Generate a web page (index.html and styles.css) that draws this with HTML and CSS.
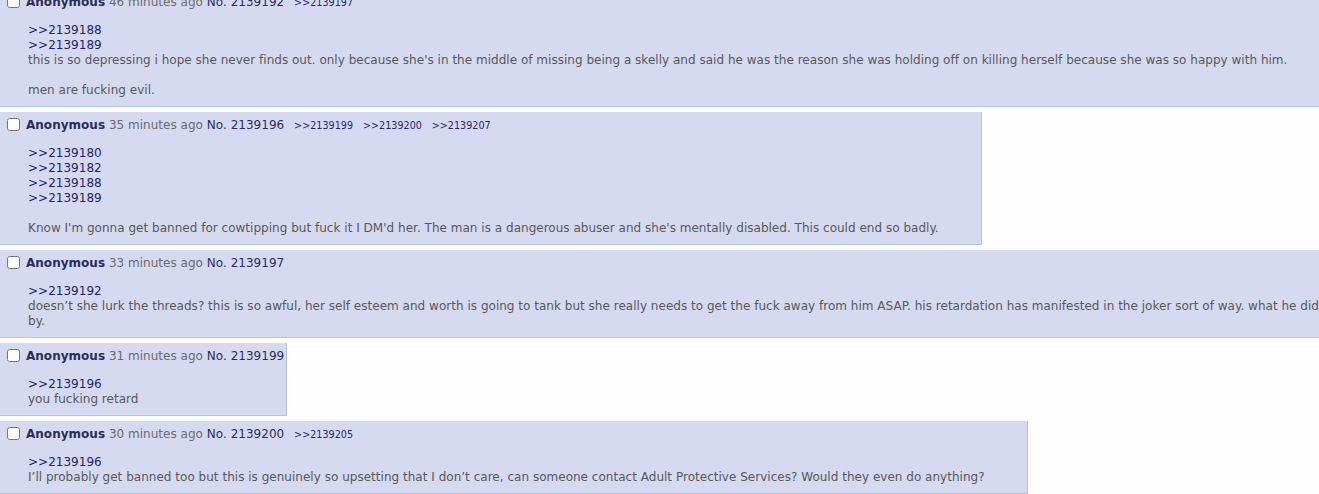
FILE: index.html
```html
<!DOCTYPE html>
<html lang="en">
<head>
	<meta charset="utf-8">
	<title>Thread</title>
	<link rel="stylesheet" href="styles.css">
</head>
<body>

	<div class="thread">

		<div class="reply">
			<div class="post-info"><input type="checkbox"><span class="name">Anonymous</span> <span class="time">46 minutes ago</span> <span class="num">No. 2139192</span> <a class="backlink" href="#p2139197">&gt;&gt;2139197</a></div>
			<blockquote class="message">
				<a class="quote" href="#p2139188">&gt;&gt;2139188</a><br>
				<a class="quote" href="#p2139189">&gt;&gt;2139189</a><br>
				this is so depressing i hope she never finds out. only because she's in the middle of missing being a skelly and said he was the reason she was holding off on killing herself because she was so happy with him.<br>
				<br>
				men are fucking evil.
			</blockquote>
		</div>

		<div class="reply" id="p2139196">
			<div class="post-info"><input type="checkbox"><span class="name">Anonymous</span> <span class="time">35 minutes ago</span> <span class="num">No. 2139196</span> <a class="backlink" href="#p2139199">&gt;&gt;2139199</a> <a class="backlink" href="#p2139200">&gt;&gt;2139200</a> <a class="backlink" href="#p2139207">&gt;&gt;2139207</a></div>
			<blockquote class="message">
				<a class="quote" href="#p2139180">&gt;&gt;2139180</a><br>
				<a class="quote" href="#p2139182">&gt;&gt;2139182</a><br>
				<a class="quote" href="#p2139188">&gt;&gt;2139188</a><br>
				<a class="quote" href="#p2139189">&gt;&gt;2139189</a><br>
				<br>
				Know I'm gonna get banned for cowtipping but fuck it I DM'd her. The man is a dangerous abuser and she's mentally disabled. This could end so badly.
			</blockquote>
		</div>

		<div class="reply" id="p2139197">
			<div class="post-info"><input type="checkbox"><span class="name">Anonymous</span> <span class="time">33 minutes ago</span> <span class="num">No. 2139197</span></div>
			<blockquote class="message">
				<a class="quote" href="#p2139192">&gt;&gt;2139192</a><br>
				doesn’t she lurk the threads? this is so awful, her self esteem and worth is going to tank but she really needs to get the fuck away from him ASAP. his retardation has manifested in the joker sort of way. what he did is sick<br>
				by.
			</blockquote>
		</div>

		<div class="reply" id="p2139199">
			<div class="post-info"><input type="checkbox"><span class="name">Anonymous</span> <span class="time">31 minutes ago</span> <span class="num">No. 2139199</span></div>
			<blockquote class="message">
				<a class="quote" href="#p2139196">&gt;&gt;2139196</a><br>
				you fucking retard
			</blockquote>
		</div>

		<div class="reply" id="p2139200">
			<div class="post-info"><input type="checkbox"><span class="name">Anonymous</span> <span class="time">30 minutes ago</span> <span class="num">No. 2139200</span> <a class="backlink" href="#p2139205">&gt;&gt;2139205</a></div>
			<blockquote class="message">
				<a class="quote" href="#p2139196">&gt;&gt;2139196</a><br>
				I’ll probably get banned too but this is genuinely so upsetting that I don’t care, can someone contact Adult Protective Services? Would they even do anything?
			</blockquote>
		</div>

	</div>

</body>
</html>
```

FILE: styles.css
```css
html {overflow:hidden; background:#fdfdfd;}
body {margin:0; font:12px/15px "DejaVu Sans",Verdana,sans-serif; color:#585858; letter-spacing:0.02px;}
a {text-decoration:none;}

.thread {display:flex; flex-direction:column; align-items:flex-start; gap:5px; width:1500px; margin-top:-11px;}

.reply {background:#d6daf0; border-right:1px solid #b7c5d9; border-bottom:1px solid #b7c5d9; padding:2px;}

.post-info {height:23px; line-height:23px; white-space:nowrap;}
.post-info input {width:13px; height:13px; margin:0 6px 0 5px; vertical-align:middle; position:relative; top:-1px;}
.name {font-weight:bold; color:#2c2d58;}
.time {color:#6b6b6b;}
.num {color:#2c2c60;}
.backlink {font-size:0.8em; color:#272470; margin-left:6px;}

.message {margin:9px 40px 6px 26px;}
.quote {color:#231f6c;}
```
